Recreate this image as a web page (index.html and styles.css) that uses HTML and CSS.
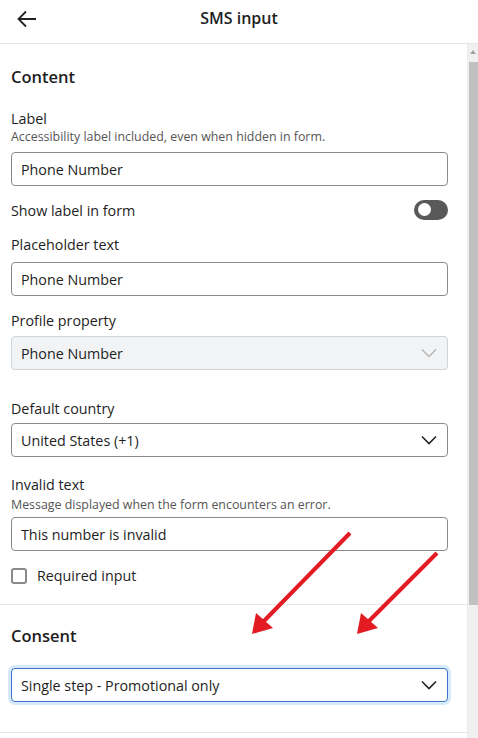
FILE: index.html
```html
<!DOCTYPE html>
<html lang="en">
<head>
<meta charset="utf-8">
<title>SMS input</title>
<link rel="stylesheet" href="styles.css">
</head>
<body>
<div class="app">
  <header class="topbar">
    <button class="back" aria-label="Back">
      <svg width="20" height="18" viewBox="0 0 20 18"><path d="M19 9H2M9 1.5 1.5 9 9 16.5" fill="none" stroke="#222" stroke-width="1.8"/></svg>
    </button>
    <h1 class="title">SMS input</h1>
  </header>
  <div class="body">
    <main class="panel">
      <section class="section">
        <h2 class="heading">Content</h2>
        <div class="field f-label">
          <div class="label">Label</div>
          <div class="help">Accessibility label included, even when hidden in form.</div>
          <div class="input">Phone Number</div>
        </div>
        <div class="toggle-row">
          <span class="label">Show label in form</span>
          <span class="toggle"><span class="knob"></span></span>
        </div>
        <div class="field f-placeholder">
          <div class="label">Placeholder text</div>
          <div class="input">Phone Number</div>
        </div>
        <div class="field f-profile">
          <div class="label">Profile property</div>
          <div class="input select disabled">Phone Number
            <svg class="chev" width="16" height="10" viewBox="0 0 16 10"><path d="M1 1.5 8 8.5 15 1.5" fill="none" stroke="#b4b4b4" stroke-width="1.4"/></svg>
          </div>
        </div>
        <div class="field f-country">
          <div class="label">Default country</div>
          <div class="input select">United States (+1)
            <svg class="chev" width="16" height="10" viewBox="0 0 16 10"><path d="M1 1.5 8 8.5 15 1.5" fill="none" stroke="#222" stroke-width="1.6"/></svg>
          </div>
        </div>
        <div class="field f-invalid">
          <div class="label">Invalid text</div>
          <div class="help">Message displayed when the form encounters an error.</div>
          <div class="input">This number is invalid</div>
        </div>
        <label class="check-row">
          <span class="checkbox"></span>
          <span class="label">Required input</span>
        </label>
      </section>
      <section class="section consent">
        <h2 class="heading">Consent</h2>
        <div class="input select focused">Single step - Promotional only
          <svg class="chev" width="16" height="10" viewBox="0 0 16 10"><path d="M1 1.5 8 8.5 15 1.5" fill="none" stroke="#222" stroke-width="1.6"/></svg>
        </div>
      </section>
      <div class="more"></div>
    </main>
    <div class="scrollbar">
      <span class="sb-up"></span>
      <span class="sb-thumb"></span>
    </div>
  </div>
  <svg class="annot" width="478" height="738" viewBox="0 0 478 738">
    <g stroke="#e31b23" stroke-width="4" stroke-linecap="butt">
      <line x1="350" y1="533" x2="262" y2="623"/>
      <line x1="437" y1="553" x2="367" y2="623"/>
    </g>
    <g fill="#e31b23">
      <polygon points="252,634 256,613 273,628"/>
      <polygon points="357,634 361,613 378,628"/>
    </g>
  </svg>
</div>
</body>
</html>
```
FILE: styles.css
```css
* { box-sizing: border-box; }
html, body { margin: 0; padding: 0; }
body {
  font-family: "Open Sans", "Noto Sans", "Liberation Sans", sans-serif;
  color: #1e1e1e;
  background: #fff;
  width: 478px;
  height: 738px;
  overflow: hidden;
}
.app { position: relative; width: 478px; height: 738px; }
.topbar {
  height: 44px;
  border-bottom: 1px solid #e6e6e6;
  display: flex;
  align-items: center;
  justify-content: center;
  position: relative;
}
.back {
  position: absolute;
  left: 17px;
  top: 10px;
  border: 0;
  background: none;
  padding: 0;
  width: 20px;
  height: 18px;
}
.back svg { display: block; }
.title {
  margin: 0;
  font-size: 16px;
  font-weight: 600;
  line-height: 22px;
  margin-top: -7px;
  color: #1e1e1e;
}
.body { display: flex; height: 694px; }
.panel { flex: 1; overflow: hidden; }
.section {
  padding: 21px 19px 0 11px;
  border-bottom: 1px solid #e8e8e8;
}
.section:first-child { padding-bottom: 20px; }
.heading {
  margin: 0;
  font-size: 16.5px;
  font-weight: 600;
  line-height: 24px;
}
.label { font-size: 14.3px; line-height: 20px; }
.help { font-size: 12.4px; line-height: 16px; color: #555; }
.field { display: flex; flex-direction: column; }
.field .input { margin-top: 7px; }
.f-label { margin-top: 20px; }
.f-placeholder { margin-top: 13px; }
.f-profile { margin-top: 15px; }
.f-profile .input { margin-top: 5px; }
.f-country { margin-top: 29px; }
.f-country .input { margin-top: 4px; }
.f-invalid { margin-top: 18px; }
.f-invalid .help { margin-top: 2px; }
.f-invalid .input { margin-top: 4px; }
.input {
  height: 34px;
  border: 1px solid #8a8a8a;
  border-radius: 4px;
  padding: 0 9px;
  font-size: 14.3px;
  display: flex;
  align-items: center;
  position: relative;
  background: #fff;
}
.select { justify-content: space-between; padding-right: 10px; }
.chev { display: block; }
.disabled { background: #f1f3f5; border-color: #cfd4d9; }
.focused {
  border-color: #3d74c3;
  box-shadow: 0 0 0 3px #d6eafb;
}
.toggle-row {
  margin-top: 14px;
  height: 22px;
  display: flex;
  align-items: center;
  justify-content: space-between;
}
.toggle {
  width: 34px;
  height: 20px;
  border-radius: 10px;
  background: #595959;
  display: flex;
  align-items: center;
  padding-left: 4px;
  margin-top: -3px;
}
.knob { width: 13px; height: 13px; border-radius: 50%; background: #fff; }
.check-row {
  margin-top: 17px;
  display: flex;
  align-items: center;
  gap: 10px;
  height: 16px;
}
.checkbox {
  width: 16px;
  height: 16px;
  border: 2px solid #8a8a8a;
  border-radius: 3px;
  background: #fff;
}
.consent { padding-top: 19px; padding-bottom: 30px; }
.consent .input { margin-top: 20px; }
.more { height: 200px; }
.scrollbar {
  width: 11px;
  background: #f0f0f0;
  border-left: 1px solid #ececec;
  display: flex;
  flex-direction: column;
  align-items: center;
}
.sb-up {
  margin-top: 6px;
  width: 0;
  height: 0;
  border-left: 3px solid transparent;
  border-right: 3px solid transparent;
  border-bottom: 4px solid #a3a3a3;
}
.sb-thumb {
  margin-top: 8px;
  width: 9px;
  height: 543px;
  background: #c1c1c1;
}
.annot { position: absolute; left: 0; top: 0; pointer-events: none; }
```
